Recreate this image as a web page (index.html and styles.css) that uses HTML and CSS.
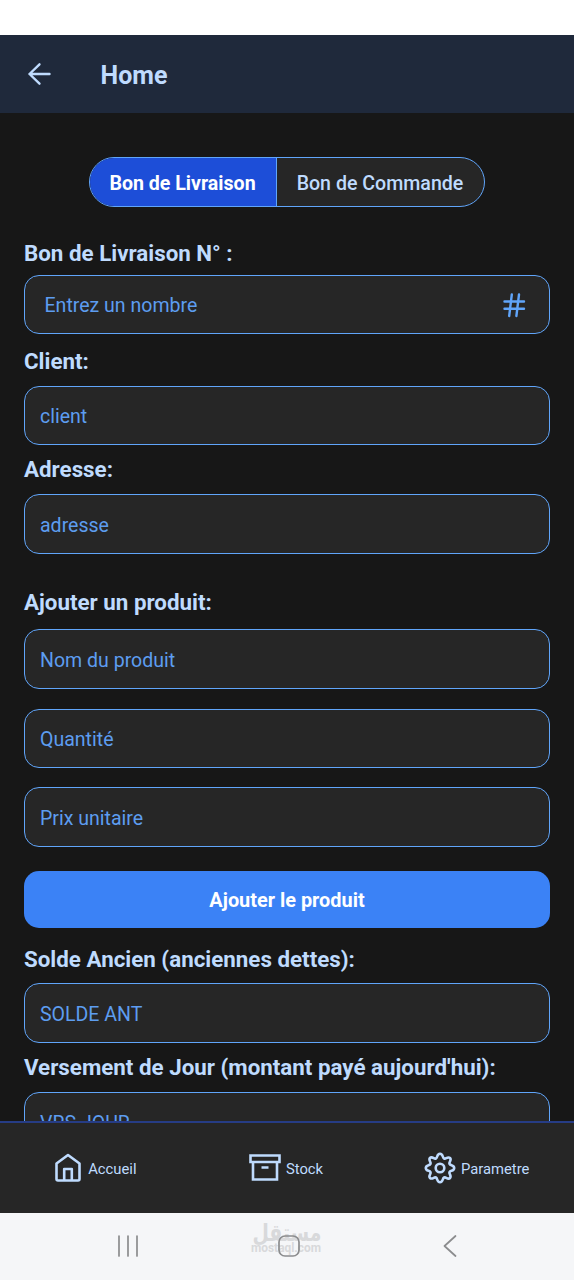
FILE: index.html
```html
<!DOCTYPE html>
<html lang="fr">
<head>
<meta charset="utf-8">
<title>Home</title>
<link rel="stylesheet" href="styles.css">
</head>
<body>
<div class="screen">
  <div class="status"></div>
  <header class="header">
    <svg class="back" width="24" height="24" viewBox="0 0 24 24"><path d="M22.500 12H2.500M12.500 2.300 2.500 12l10 9.700"/></svg>
    <h1 class="title">Home</h1>
  </header>
  <main class="content">
    <div class="segments">
      <div class="segment active"><span class="segment-text">Bon de Livraison</span></div>
      <div class="segment"><span class="segment-text">Bon de Commande</span></div>
    </div>
    <label class="label label-number">Bon de Livraison N° :</label>
    <div class="field field-number"><span>Entrez un nombre</span>
      <svg class="hash" width="24" height="26" viewBox="0 0 24 26"><path d="M2.500 9.500h19.500M2.500 16.700h19.500M9.800 2.500l-2.600 21.500M17 2.500l-2.600 21.500"/></svg>
    </div>
    <label class="label label-client">Client:</label>
    <div class="field"><span>client</span></div>
    <label class="label label-address">Adresse:</label>
    <div class="field tall"><span>adresse</span></div>
    <label class="label label-product">Ajouter un produit:</label>
    <div class="stack">
      <div class="field tall"><span>Nom du produit</span></div>
      <div class="field"><span>Quantité</span></div>
      <div class="field tall"><span>Prix unitaire</span></div>
    </div>
    <div class="button">Ajouter le produit</div>
    <label class="label label-balance">Solde Ancien (anciennes dettes):</label>
    <div class="field tall"><span>SOLDE ANT</span></div>
    <label class="label label-payment">Versement de Jour (montant payé aujourd'hui):</label>
    <div class="field tall"><span>VRS JOUR</span></div>
  </main>
  <nav class="tabs">
    <div class="tab tab-home">
      <svg width="28" height="30" viewBox="0 0 28 30"><path d="M2.500 10.500 14 2l11.500 8.500v15.500a1.500 1.500 0 0 1-1.500 1.500H4A1.500 1.500 0 0 1 2.500 26zM10.200 27.500V16h7.600v11.500"/></svg>
      <span>Accueil</span>
    </div>
    <div class="tab tab-stock">
      <svg width="32" height="28" viewBox="0 0 32 28"><path d="M1.500 1.500h29v6.500h-29zM4 8v17.500h24V8M12.500 13.500h7"/></svg>
      <span>Stock</span>
    </div>
    <div class="tab tab-settings">
      <svg width="32" height="32" viewBox="0 0 32 32"><circle cx="16" cy="16" r="4.300"/><path d="M13.200 4.500Q14 1.800 16 1.800T18.800 4.500Q19.700 7.600 22.200 6.200Q24.700 4.800 26 6T25.800 9.800Q24.400 12.300 27.500 13.200Q30.200 14 30.200 16T27.500 18.800Q24.400 19.700 25.800 22.200Q27.200 24.700 26 26T22.200 25.800Q19.700 24.400 18.800 27.500Q18 30.200 16 30.200T13.200 27.500Q12.300 24.400 9.800 25.800Q7.300 27.200 6 26T6.200 22.200Q7.600 19.700 4.500 18.800Q1.800 18 1.800 16T4.500 13.200Q7.600 12.300 6.200 9.800Q4.800 7.300 6 6T9.800 6.200Q12.300 7.600 13.200 4.500z"/></svg>
      <span>Parametre</span>
    </div>
  </nav>
  <footer class="system">
    <svg class="recents" width="22" height="22" viewBox="0 0 22 22"><path d="M2 1v20M11 1v20M20 1v20"/></svg>
    <div class="center">
      <svg class="watermark" width="72" height="34" viewBox="0 0 72 34">
        <text class="mark-ar" x="36" y="12" text-anchor="middle" textLength="69" lengthAdjust="spacingAndGlyphs">مستقل</text>
        <text class="mark-en" x="0" y="23" textLength="70" lengthAdjust="spacingAndGlyphs">mostaql.com</text>
      </svg>
      <svg class="home-key" width="22" height="22" viewBox="0 0 22 22"><rect x="1" y="1" width="20" height="20" rx="6"/></svg>
    </div>
    <svg class="back-key" width="14" height="22" viewBox="0 0 14 22"><path d="M12.500 1 1.500 11l11 10"/></svg>
  </footer>
</div>
</body>
</html>
```
FILE: styles.css
```css
* { box-sizing: border-box; }
body { margin: 0; font-family: Roboto, "Liberation Sans", sans-serif; }
svg { display: block; flex: none; fill: none; stroke-linecap: round; stroke-linejoin: round; }
.screen { display: flex; flex-direction: column; width: 574px; height: 1280px; overflow: hidden; background: #171717; }
.status { flex: none; height: 35px; background: #fff; }
.header { flex: none; display: flex; align-items: center; height: 78px; padding: 2px 27px 0; background: #1f293b; color: #bfdbfe; }
.back { stroke: #bfdbfe; stroke-width: 2.400; margin-top: -2px; }
.title { margin: 2px 0 0 49.500px; font-size: 25px; line-height: 30px; font-weight: 700; }
.content { flex: 1; min-height: 0; overflow: hidden; display: flex; flex-direction: column; padding: 44px 24px 0; }
.content > * { flex: none; }
.segments { align-self: center; display: flex; width: 396px; height: 50px; border: 1px solid #60a5fa; border-radius: 25px; overflow: hidden; background: #262626; }
.segment { flex: 1; display: flex; align-items: center; justify-content: center; padding: 2px 1px 0 0; color: #bfdbfe; font-size: 19.600px; font-weight: 500; white-space: nowrap; }
.segment.active { flex: none; width: 187px; border-right: 1px solid #60a5fa; background: #1d4ed8; color: #fff; font-weight: 700; }
.label { display: block; height: 26px; line-height: 26px; font-size: 22.350px; font-weight: 700; color: #bfdbfe; white-space: nowrap; }
.label-number { margin: 33px 0 9px; }
.label-client { margin: 14px 0 12px; }
.label-address { margin: 11px 0 12px; }
.label-product { margin: 35px 0 14px; }
.label-balance { margin: 18px 0 11px; }
.label-payment { margin: 11px 0 12px; }
.field { display: flex; align-items: center; justify-content: space-between; height: 59px; padding: 3px 15px 0; border: 1px solid #60a5fa; border-radius: 15px; background: #262626; color: #5d9df0; font-size: 19.550px; line-height: 24px; }
.field.tall { height: 60px; }
.field-number { padding: 3px 23px 0 19.500px; }
.hash { stroke: #60a5fa; stroke-width: 2.400; }
.field-number .hash { margin-top: -2px; }
.stack { display: grid; gap: 19.500px; }
.button { display: flex; align-items: center; justify-content: center; height: 57px; margin-top: 24px; padding-top: 2px; border-radius: 15px; background: #3b82f6; color: #fff; font-size: 19.900px; font-weight: 700; }
.tabs { flex: none; display: flex; height: 92px; border-top: 2px solid #263c85; background: #262626; color: #bfdbfe; font-size: 14.800px; }
.tab { flex: 1; display: flex; align-items: center; justify-content: center; gap: 5px; padding-top: 2px; }
.tab svg { margin-top: -2px; stroke: #bfdbfe; stroke-width: 2.600; }
.tab-home svg { margin-right: 1px; }
.tab-stock svg { stroke-linecap: butt; stroke-linejoin: miter; }
.tab-settings { padding-right: 2px; }
.system { flex: none; display: flex; align-items: center; height: 67px; padding: 0 117px 2px; justify-content: space-between; background: #f5f6f8; }
.system svg { stroke: #8b8c8e; stroke-width: 1.700; }
.center { position: relative; width: 72px; height: 34px; margin-left: -8px; }
.system .watermark { stroke: none; fill: #d8d9db; font-weight: 700; overflow: visible; }
.mark-ar { font-family: "DejaVu Sans", sans-serif; font-size: 24px; }
.mark-en { font-family: Roboto, sans-serif; font-size: 12px; }
.home-key { position: absolute; left: 27px; top: 6px; }
```
